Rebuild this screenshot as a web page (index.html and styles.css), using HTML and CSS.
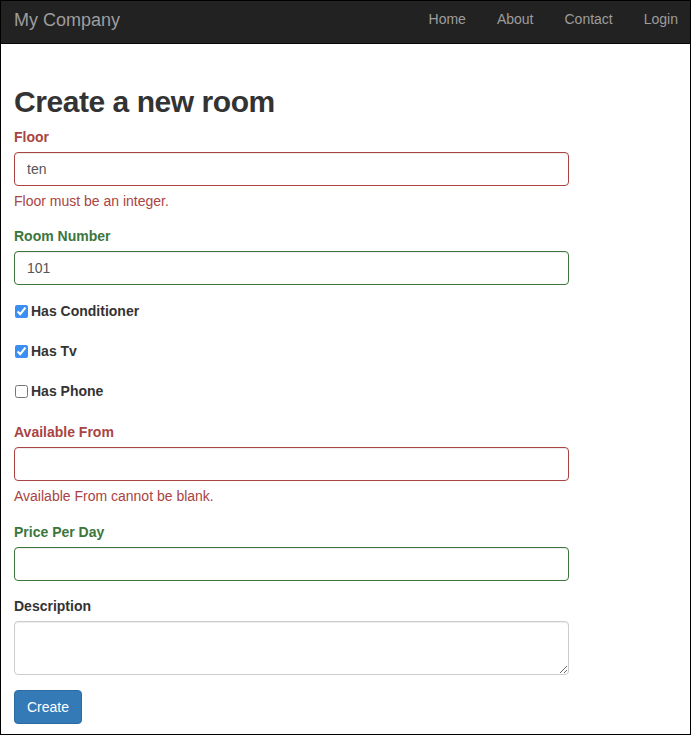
FILE: index.html
```html
<!DOCTYPE html>
<html lang="en">
<head>
<meta charset="utf-8">
<title>Create a new room</title>
<link rel="stylesheet" href="styles.css">
</head>
<body>
<div class="page">
  <nav class="navbar">
    <a class="brand" href="#">My Company</a>
    <ul class="nav">
      <li><a href="#">Home</a></li>
      <li><a href="#">About</a></li>
      <li><a href="#">Contact</a></li>
      <li><a href="#">Login</a></li>
    </ul>
  </nav>
  <main class="content">
    <h1 class="title">Create a new room</h1>
    <form class="room-form">
      <div class="form-group has-error">
        <label class="control-label" for="floor">Floor</label>
        <input class="form-control" id="floor" type="text" value="ten">
        <div class="help-block">Floor must be an integer.</div>
      </div>
      <div class="form-group has-success">
        <label class="control-label" for="room">Room Number</label>
        <input class="form-control" id="room" type="text" value="101">
      </div>
      <div class="checks">
        <label class="checkbox"><input type="checkbox" checked><span>Has Conditioner</span></label>
        <label class="checkbox"><input type="checkbox" checked><span>Has Tv</span></label>
        <label class="checkbox"><input type="checkbox"><span>Has Phone</span></label>
      </div>
      <div class="form-group has-error form-group-wide">
        <label class="control-label" for="from">Available From</label>
        <input class="form-control" id="from" type="text">
        <div class="help-block">Available From cannot be blank.</div>
      </div>
      <div class="form-group has-success">
        <label class="control-label" for="price">Price Per Day</label>
        <input class="form-control" id="price" type="text">
      </div>
      <div class="form-group">
        <label class="control-label" for="desc">Description</label>
        <textarea class="form-control textarea" id="desc"></textarea>
      </div>
      <button class="btn" type="submit">Create</button>
    </form>
  </main>
</div>
</body>
</html>
```
FILE: styles.css
```css
html, body {
  margin: 0;
  padding: 0;
}
body {
  font-family: "Liberation Sans", Arial, Helvetica, sans-serif;
  font-size: 14px;
  line-height: 20px;
  color: #333;
  background: #fff;
}
.page {
  box-sizing: border-box;
  width: 691px;
  height: 735px;
  border: 1px solid #000;
  overflow: hidden;
}
.navbar {
  display: flex;
  justify-content: space-between;
  align-items: flex-start;
  height: 42px;
  background: #222;
  border-bottom: 1px solid #080808;
  padding: 0 12px 0 13px;
}
.brand {
  font-size: 18px;
  line-height: 20px;
  padding-top: 9px;
  color: #9d9d9d;
  text-decoration: none;
}
.nav {
  display: flex;
  gap: 31px;
  list-style: none;
  margin: 0;
  padding: 8px 0 0;
}
.nav a {
  color: #9d9d9d;
  text-decoration: none;
  font-size: 14px;
  line-height: 20px;
}
.content {
  padding: 41px 13px 0;
}
.title {
  margin: 0 0 9px;
  font-size: 30px;
  line-height: 33px;
  font-weight: bold;
  letter-spacing: -0.45px;
  color: #333;
}
.room-form {
  width: 555px;
}
.form-group {
  margin-bottom: 15px;
}
.form-group-wide {
  margin-bottom: 16px;
}
.control-label {
  display: inline-block;
  margin-bottom: 5px;
  font-weight: bold;
}
.form-control {
  display: block;
  box-sizing: border-box;
  width: 100%;
  height: 34px;
  padding: 6px 12px;
  font-family: inherit;
  font-size: 14px;
  line-height: 20px;
  color: #555;
  background: #fff;
  border: 1px solid #ccc;
  border-radius: 4px;
  box-shadow: inset 0 1px 1px rgba(0, 0, 0, .075);
  margin: 0;
}
.textarea {
  height: 54px;
  resize: vertical;
}
.help-block {
  margin-top: 5px;
  color: #a94442;
}
.has-error .control-label { color: #a94442; }
.has-error .form-control { border-color: #a94442; }
.has-success .control-label { color: #3c763d; }
.has-success .form-control { border-color: #3c763d; }
.checks {
  display: flex;
  flex-direction: column;
  gap: 20px;
  padding-top: 1px;
  margin-bottom: 21px;
}
.checkbox {
  display: flex;
  align-items: center;
  height: 20px;
  font-weight: bold;
}
.checkbox input {
  width: 13px;
  height: 13px;
  margin: 1px 3px 0 1px;
  accent-color: #3b8ff3;
}
.btn {
  display: inline-block;
  padding: 6px 12px;
  font-family: inherit;
  font-size: 14px;
  line-height: 20px;
  color: #fff;
  background: #337ab7;
  border: 1px solid #2e6da4;
  border-radius: 4px;
  cursor: pointer;
}
```
